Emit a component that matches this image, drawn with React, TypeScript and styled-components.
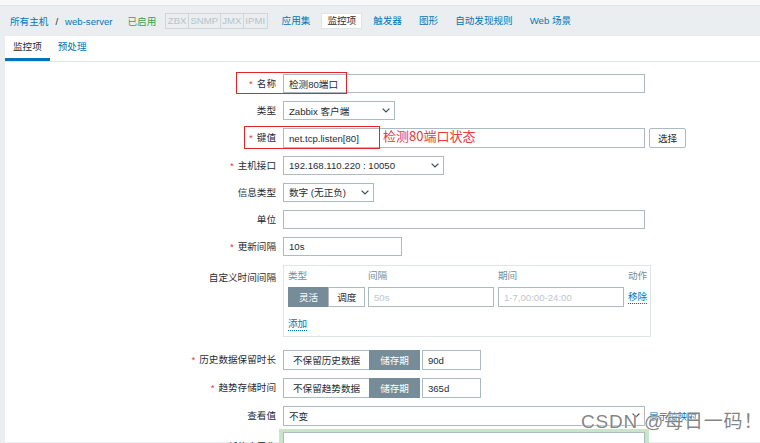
import React from 'react';
import styled, { createGlobalStyle } from 'styled-components';

const Global = createGlobalStyle`
  html, body { margin: 0; padding: 0; }
  body {
    font-family: "Liberation Sans", Arial, "Noto Sans CJK SC", sans-serif;
    font-size: 9.6px;
    color: #1f2c33;
    background: #ebeef0;
  }
  * { box-sizing: border-box; }
`;

const BLUE = '#0275b8';
const BORDER = '#acbbc2';
const LIGHT = '#dfe4e7';
const SLATE = '#768d99';

const Page = styled.div`
  position: relative;
  width: 760px;
  height: 443px;
  overflow: hidden;
  background: #ebeef0;
`;

const TopStrip = styled.div`
  height: 6px;
  background: #f7f8f9;
  border-bottom: 1px solid ${LIGHT};
`;

const Header = styled.div`
  height: 30px;
  display: flex;
  align-items: center;
  padding-left: 10px;
  background: #ebeef0;
`;

const Link = styled.span`
  color: ${BLUE};
  white-space: nowrap;
`;

const Sep = styled.span`
  color: #1f2c33;
  margin: 0 7px;
`;

const Status = styled.span`
  color: #429e47;
  margin-left: 15px;
`;

const Tags = styled.div`
  display: flex;
  margin-left: 9px;
  border: 1px solid #cfd6da;
  height: 16px;
`;

const Tag = styled.span`
  padding: 0 1.5px;
  line-height: 14px;
  color: #b7c3c9;
  & + & { border-left: 1px solid #cfd6da; }
`;

const Nav = styled.div`
  display: flex;
  gap: 5px;
  margin-left: 8px;
`;

const NavItem = styled.span<{ $active?: boolean }>`
  height: 16px;
  line-height: 14px;
  padding: 0 5px;
  border: 1px solid ${(p) => (p.$active ? LIGHT : 'transparent')};
  background: ${(p) => (p.$active ? '#fff' : 'transparent')};
  color: ${(p) => (p.$active ? '#1f2c33' : BLUE)};
  white-space: nowrap;
`;

const Panel = styled.div`
  margin-left: 5px;
  background: #fff;
  height: 406px;
`;

const TabBar = styled.div`
  display: flex;
  height: 26px;
  border-bottom: 1px solid ${LIGHT};
`;

const Tab = styled.div<{ $active?: boolean }>`
  height: 25px;
  padding: 0 8px 2px;
  display: flex;
  align-items: center;
  border-bottom: 3px solid ${(p) => (p.$active ? BLUE : 'transparent')};
  color: ${(p) => (p.$active ? '#1f2c33' : BLUE)};
`;

const Form = styled.div`
  padding-top: 8px;
`;

const Row = styled.div<{ $top?: boolean; $pt?: number; $pb?: number }>`
  display: grid;
  grid-template-columns: 271px 1fr;
  column-gap: 7px;
  align-items: ${(p) => (p.$top ? 'start' : 'center')};
  padding-top: ${(p) => (p.$pt ?? 4)}px;
  padding-bottom: ${(p) => (p.$pb ?? 4)}px;
`;

const Label = styled.div<{ $pt?: number }>`
  text-align: right;
  line-height: 19.2px;
  padding-top: ${(p) => p.$pt ?? 0}px;
  white-space: nowrap;
`;

const Req = styled.span`
  color: #e33734;
  margin-right: 4px;
`;

const Field = styled.div`
  display: flex;
  align-items: center;
`;

const Input = styled.input<{ $w: number }>`
  width: ${(p) => p.$w}px;
  height: 19.2px;
  border: 1px solid ${BORDER};
  padding: 0 5px;
  font: inherit;
  color: #1f2c33;
  background: #fff;
  outline: none;
  margin: 0;
  &::placeholder { color: #bcc7cc; }
`;

const SelectBox = styled.div<{ $w: number }>`
  width: ${(p) => p.$w}px;
  height: 19.2px;
  border: 1px solid ${BORDER};
  padding: 0 4px 0 5px;
  display: flex;
  align-items: center;
  justify-content: space-between;
  background: #fff;
`;

const Button = styled.div`
  margin-left: 4px;
  height: 19.2px;
  width: 37px;
  border: 1px solid ${BORDER};
  border-radius: 2px;
  display: flex;
  align-items: center;
  justify-content: center;
  background: #fff;
`;

const SideLink = styled.span`
  color: ${BLUE};
  margin-left: 4px;
  white-space: nowrap;
`;

const CustomBox = styled.div`
  width: 368px;
  height: 72px;
  margin-top: 1px;
  border: 1px solid ${LIGHT};
  padding: 4px 0 0 4px;
`;

const IntervalGrid = styled.div`
  display: grid;
  grid-template-columns: 76px 126px 126px max-content;
  column-gap: 4px;
  align-items: center;
  white-space: nowrap;
`;

const ColHead = styled.div`
  color: ${SLATE};
  line-height: 11px;
  margin-bottom: 6px;
`;

const SegGroup = styled.div`
  display: flex;
`;

const Seg = styled.div<{ $active?: boolean; $px: number }>`
  height: 19.2px;
  padding: 0 ${(p) => p.$px}px;
  display: flex;
  align-items: center;
  white-space: nowrap;
  border: 1px solid ${(p) => (p.$active ? SLATE : BORDER)};
  background: ${(p) => (p.$active ? SLATE : '#fff')};
  color: ${(p) => (p.$active ? '#fff' : '#1f2c33')};
  & + & { margin-left: -1px; }
`;

const DotLink = styled.span`
  color: ${BLUE};
  border-bottom: 1px dotted ${BLUE};
  line-height: 11px;
  padding-bottom: 1px;
  justify-self: start;
  white-space: nowrap;
`;

const AddRow = styled.div`
  margin-top: 11px;
`;

const SmallInput = styled(Input)`
  margin-left: 2px;
`;

const GreenWrap = styled.div`
  width: 370px;
  margin-left: -4px;
  padding: 3px 4px;
  background: #c9e5c9;
`;

const Overlay = styled.div<{ $x: number; $y: number; $w: number; $h: number }>`
  position: absolute;
  left: ${(p) => p.$x}px;
  top: ${(p) => p.$y}px;
  width: ${(p) => p.$w}px;
  height: ${(p) => p.$h}px;
  border: 1px solid #e0262b;
  pointer-events: none;
`;

const Note = styled.div`
  position: absolute;
  left: 383px;
  top: 128px;
  font-size: 13px;
  line-height: 16px;
  color: #e83a3a;
  font-family: "Noto Sans CJK SC", "Liberation Sans", sans-serif;
  white-space: nowrap;
`;

const Watermark = styled.div`
  position: absolute;
  left: 581px;
  top: 410px;
  font-size: 19px;
  line-height: 23px;
  letter-spacing: 0.8px;
  color: rgba(110, 110, 110, 0.85);
  text-shadow: 0 0 1px #fff, 0 0 2px #fff;
  font-family: "Liberation Sans", "Noto Sans CJK SC", sans-serif;
  white-space: nowrap;
`;

const Chevron = () => (
  <svg width="8" height="5" viewBox="0 0 8 5">
    <polyline points="0.6,0.6 4,4 7.4,0.6" fill="none" stroke="#3d4a51" strokeWidth="1.2" />
  </svg>
);

const Select: React.FC<{ w: number; children: React.ReactNode }> = ({ w, children }) => (
  <SelectBox $w={w}>
    <span>{children}</span>
    <Chevron />
  </SelectBox>
);

export default function App() {
  return (
    <Page>
      <Global />
      <TopStrip />
      <Header>
        <Link>所有主机</Link>
        <Sep>/</Sep>
        <Link>web-server</Link>
        <Status>已启用</Status>
        <Tags>
          <Tag>ZBX</Tag>
          <Tag>SNMP</Tag>
          <Tag>JMX</Tag>
          <Tag>IPMI</Tag>
        </Tags>
        <Nav>
          <NavItem>应用集</NavItem>
          <NavItem $active>监控项</NavItem>
          <NavItem>触发器</NavItem>
          <NavItem>图形</NavItem>
          <NavItem>自动发现规则</NavItem>
          <NavItem>Web 场景</NavItem>
        </Nav>
      </Header>
      <Panel>
        <TabBar>
          <Tab $active>监控项</Tab>
          <Tab>预处理</Tab>
        </TabBar>
        <Form>
          <Row>
            <Label><Req>*</Req>名称</Label>
            <Field><Input $w={362} readOnly value="检测80端口" /></Field>
          </Row>
          <Row>
            <Label>类型</Label>
            <Field><Select w={112}>Zabbix 客户端</Select></Field>
          </Row>
          <Row>
            <Label><Req>*</Req>键值</Label>
            <Field>
              <Input $w={362} readOnly value="net.tcp.listen[80]" />
              <Button>选择</Button>
            </Field>
          </Row>
          <Row>
            <Label><Req>*</Req>主机接口</Label>
            <Field><Select w={161}>192.168.110.220 : 10050</Select></Field>
          </Row>
          <Row>
            <Label>信息类型</Label>
            <Field><Select w={91}>数字 (无正负)</Select></Field>
          </Row>
          <Row>
            <Label>单位</Label>
            <Field><Input $w={362} readOnly value="" /></Field>
          </Row>
          <Row>
            <Label><Req>*</Req>更新间隔</Label>
            <Field><Input $w={119} readOnly value="10s" /></Field>
          </Row>
          <Row $top $pb={9}>
            <Label $pt={4}>自定义时间间隔</Label>
            <CustomBox>
              <IntervalGrid>
                <ColHead>类型</ColHead>
                <ColHead>间隔</ColHead>
                <ColHead>期间</ColHead>
                <ColHead>动作</ColHead>
                <SegGroup>
                  <Seg $active $px={10}>灵活</Seg>
                  <Seg $px={8}>调度</Seg>
                </SegGroup>
                <Input $w={126} readOnly placeholder="50s" />
                <Input $w={126} readOnly placeholder="1-7,00:00-24:00" />
                <DotLink>移除</DotLink>
              </IntervalGrid>
              <AddRow><DotLink>添加</DotLink></AddRow>
            </CustomBox>
          </Row>
          <Row $pt={4} $pb={4.4}>
            <Label><Req>*</Req>历史数据保留时长</Label>
            <Field>
              <SegGroup>
                <Seg $px={9}>不保留历史数据</Seg>
                <Seg $active $px={10}>储存期</Seg>
              </SegGroup>
              <SmallInput $w={59} readOnly value="90d" />
            </Field>
          </Row>
          <Row $pt={4.4} $pb={4.4}>
            <Label><Req>*</Req>趋势存储时间</Label>
            <Field>
              <SegGroup>
                <Seg $px={9}>不保留趋势数据</Seg>
                <Seg $active $px={10}>储存期</Seg>
              </SegGroup>
              <SmallInput $w={59} readOnly value="365d" />
            </Field>
          </Row>
          <Row $pt={4.4} $pb={3}>
            <Label>查看值</Label>
            <Field>
              <Select w={362}>不变</Select>
              <SideLink>展示值映射</SideLink>
            </Field>
          </Row>
          <Row $top $pt={0}>
            <Label $pt={8}>新的应用集</Label>
            <GreenWrap><Input $w={362} readOnly value="" /></GreenWrap>
          </Row>
        </Form>
      </Panel>
      <Overlay $x={236} $y={72} $w={111} $h={22} />
      <Overlay $x={244} $y={126} $w={136} $h={23} />
      <Note>检测80端口状态</Note>
      <Watermark>CSDN @每日一码！</Watermark>
    </Page>
  );
}
